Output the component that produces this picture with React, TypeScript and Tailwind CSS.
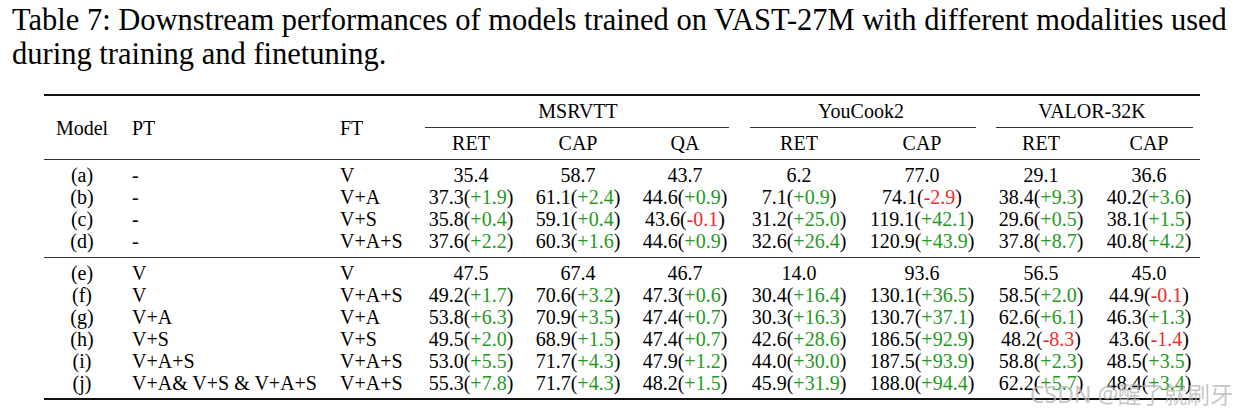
import React from 'react';

type Cell = { v: string; d?: string }; // value and optional delta

interface Row {
  model: string;
  pt: string;
  ft: string;
  cells: Cell[];
}

const top: Row[] = [
  { model: '(a)', pt: '-', ft: 'V', cells: [{ v: '35.4' }, { v: '58.7' }, { v: '43.7' }, { v: '6.2' }, { v: '77.0' }, { v: '29.1' }, { v: '36.6' }] },
  { model: '(b)', pt: '-', ft: 'V+A', cells: [{ v: '37.3', d: '+1.9' }, { v: '61.1', d: '+2.4' }, { v: '44.6', d: '+0.9' }, { v: '7.1', d: '+0.9' }, { v: '74.1', d: '-2.9' }, { v: '38.4', d: '+9.3' }, { v: '40.2', d: '+3.6' }] },
  { model: '(c)', pt: '-', ft: 'V+S', cells: [{ v: '35.8', d: '+0.4' }, { v: '59.1', d: '+0.4' }, { v: '43.6', d: '-0.1' }, { v: '31.2', d: '+25.0' }, { v: '119.1', d: '+42.1' }, { v: '29.6', d: '+0.5' }, { v: '38.1', d: '+1.5' }] },
  { model: '(d)', pt: '-', ft: 'V+A+S', cells: [{ v: '37.6', d: '+2.2' }, { v: '60.3', d: '+1.6' }, { v: '44.6', d: '+0.9' }, { v: '32.6', d: '+26.4' }, { v: '120.9', d: '+43.9' }, { v: '37.8', d: '+8.7' }, { v: '40.8', d: '+4.2' }] },
];

const bottom: Row[] = [
  { model: '(e)', pt: 'V', ft: 'V', cells: [{ v: '47.5' }, { v: '67.4' }, { v: '46.7' }, { v: '14.0' }, { v: '93.6' }, { v: '56.5' }, { v: '45.0' }] },
  { model: '(f)', pt: 'V', ft: 'V+A+S', cells: [{ v: '49.2', d: '+1.7' }, { v: '70.6', d: '+3.2' }, { v: '47.3', d: '+0.6' }, { v: '30.4', d: '+16.4' }, { v: '130.1', d: '+36.5' }, { v: '58.5', d: '+2.0' }, { v: '44.9', d: '-0.1' }] },
  { model: '(g)', pt: 'V+A', ft: 'V+A', cells: [{ v: '53.8', d: '+6.3' }, { v: '70.9', d: '+3.5' }, { v: '47.4', d: '+0.7' }, { v: '30.3', d: '+16.3' }, { v: '130.7', d: '+37.1' }, { v: '62.6', d: '+6.1' }, { v: '46.3', d: '+1.3' }] },
  { model: '(h)', pt: 'V+S', ft: 'V+S', cells: [{ v: '49.5', d: '+2.0' }, { v: '68.9', d: '+1.5' }, { v: '47.4', d: '+0.7' }, { v: '42.6', d: '+28.6' }, { v: '186.5', d: '+92.9' }, { v: '48.2', d: '-8.3' }, { v: '43.6', d: '-1.4' }] },
  { model: '(i)', pt: 'V+A+S', ft: 'V+A+S', cells: [{ v: '53.0', d: '+5.5' }, { v: '71.7', d: '+4.3' }, { v: '47.9', d: '+1.2' }, { v: '44.0', d: '+30.0' }, { v: '187.5', d: '+93.9' }, { v: '58.8', d: '+2.3' }, { v: '48.5', d: '+3.5' }] },
  { model: '(j)', pt: 'V+A& V+S & V+A+S', ft: 'V+A+S', cells: [{ v: '55.3', d: '+7.8' }, { v: '71.7', d: '+4.3' }, { v: '48.2', d: '+1.5' }, { v: '45.9', d: '+31.9' }, { v: '188.0', d: '+94.4' }, { v: '62.2', d: '+5.7' }, { v: '48.4', d: '+3.4' }] },
];

const cols = 'grid grid-cols-[76px_208px_90px_106px_108px_106px_122px_124px_114px_102px]';

function DataRow({ row }: { row: Row }) {
  return (
    <>
      <div className="h-[22px] leading-[22px] text-center">{row.model}</div>
      <div className="h-[22px] leading-[22px] pl-3 whitespace-nowrap">{row.pt}</div>
      <div className="h-[22px] leading-[22px] pl-3 whitespace-nowrap">{row.ft}</div>
      {row.cells.map((c, i) => (
        <div key={i} className="h-[22px] leading-[22px] text-center whitespace-nowrap">
          {c.v}
          {c.d && (
            <>
              (<span className={c.d.startsWith('-') ? 'text-[#f02b2b]' : 'text-[#1f9a1f]'}>{c.d}</span>)
            </>
          )}
        </div>
      ))}
    </>
  );
}

export default function App() {
  return (
    <div className="relative w-[1240px] h-[413px] bg-white text-black font-['Liberation_Serif',serif] overflow-hidden">
      {/* caption */}
      <div className="pl-[12px] pt-[3px] text-[30.5px] leading-[34px]">
        <div className="whitespace-nowrap">Table 7: Downstream performances of models trained on VAST-27M with different modalities used</div>
        <div className="whitespace-nowrap">during training and finetuning.</div>
      </div>

      {/* table */}
      <div className="ml-[44px] mt-[23px] w-[1156px] text-[20px]">
        <div className="h-[2px] bg-[#111]" />
        <div className={cols}>
          <div className="row-span-2 flex items-center justify-center">Model</div>
          <div className="row-span-2 flex items-center pl-3">PT</div>
          <div className="row-span-2 flex items-center pl-3">FT</div>
          <div className="col-span-3 h-[32px] flex flex-col">
            <div className="flex-1 leading-[30px] text-center">MSRVTT</div>
            <div className="ml-[7px] mr-[9px] h-[1px] bg-[#333]" />
          </div>
          <div className="col-span-2 h-[32px] flex flex-col">
            <div className="flex-1 leading-[30px] text-center">YouCook2</div>
            <div className="ml-[12px] mr-[8px] h-[1px] bg-[#333]" />
          </div>
          <div className="col-span-2 h-[32px] flex flex-col">
            <div className="flex-1 leading-[30px] text-center">VALOR-32K</div>
            <div className="ml-[12px] mr-[7px] h-[1px] bg-[#333]" />
          </div>
          {['RET', 'CAP', 'QA', 'RET', 'CAP', 'RET', 'CAP'].map((h, i) => (
            <div key={i} className="h-[31px] leading-[30px] text-center">{h}</div>
          ))}
        </div>
        <div className="h-[1px] bg-[#333]" />
        <div className={`${cols} pt-[4px] pb-[5px]`}>
          {top.map(r => <DataRow key={r.model} row={r} />)}
        </div>
        <div className="h-[1px] bg-[#333]" />
        <div className={`${cols} pt-[4px] pb-[4px]`}>
          {bottom.map(r => <DataRow key={r.model} row={r} />)}
        </div>
        <div className="h-[2px] bg-[#111]" />
      </div>

      {/* watermark */}
      <div className="absolute left-[1030px] top-[380px] text-[23px] leading-[28px] text-[#b8b8b8]/80 font-['Noto_Sans','Noto_Sans_CJK_SC',sans-serif] whitespace-nowrap">
        CSDN @醒了就刷牙
      </div>
    </div>
  );
}
